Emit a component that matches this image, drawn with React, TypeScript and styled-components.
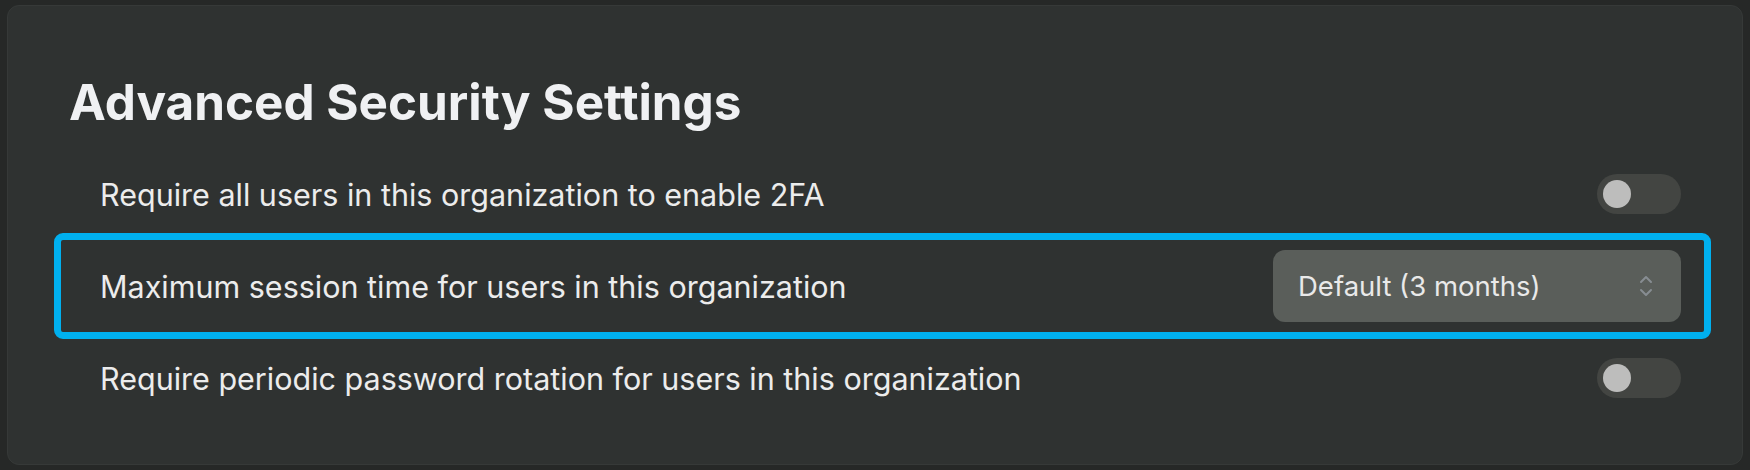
import styled, { createGlobalStyle } from 'styled-components';

const GlobalStyle = createGlobalStyle`
  html, body {
    margin: 0;
    padding: 0;
    background: #262827;
  }
  body {
    font-family: Inter, "Noto Sans", sans-serif;
    -webkit-font-smoothing: antialiased;
  }
`;

const Page = styled.div`
  width: 1750px;
  height: 470px;
  padding: 5px 7px;
  box-sizing: border-box;
`;

const Card = styled.section`
  height: 460px;
  box-sizing: border-box;
  background: #2f3231;
  border: 1px solid #363938;
  border-radius: 12px;
  padding: 66px 38px 0 53px;
`;

/* heading */
const Title = styled.h2`
  margin: 0 0 16px 8px;
  font-size: 49.4px;
  line-height: 60px;
  font-weight: 700;
  color: #f0f1f3;
`;

const List = styled.div`
  display: flex;
  flex-direction: column;
`;

const Row = styled.div<{ $highlight?: boolean }>`
  display: flex;
  align-items: center;
  justify-content: space-between;
  height: 92px;
  padding: 0 23px 0 39px;
  border-radius: 2px;
  outline: ${(p) => (p.$highlight ? '7px solid #00b0ef' : 'none')};
  outline-offset: 0;
`;

const Label = styled.span`
  font-size: 30.5px;
  color: #ececec;
`;

const Track = styled.button<{ $on?: boolean }>`
  position: relative;
  width: 84px;
  height: 40px;
  padding: 0;
  border: none;
  border-radius: 20px;
  background: ${(p) => (p.$on ? '#00b0ef' : '#434542')};
  cursor: pointer;

  &::after {
    content: '';
    position: absolute;
    top: 6px;
    left: ${(p) => (p.$on ? '50px' : '6px')};
    width: 28px;
    height: 28px;
    border-radius: 50%;
    background: #bdbdbc;
  }
`;

const Select = styled.div`
  display: flex;
  align-items: center;
  justify-content: space-between;
  width: 408px;
  height: 72px;
  box-sizing: border-box;
  padding: 0 28px 0 25px;
  border-radius: 12px;
  background: #5a5e5a;
  font-size: 27.5px;
  color: #e9e9e9;
`;

function Chevrons() {
  return (
    <svg width="14" height="22" viewBox="0 0 14 22" fill="none">
      <path d="M2 7 L7 2 L12 7" stroke="#878d92" strokeWidth="2" strokeLinecap="round" strokeLinejoin="round" />
      <path d="M2 15 L7 20 L12 15" stroke="#878d92" strokeWidth="2" strokeLinecap="round" strokeLinejoin="round" />
    </svg>
  );
}

export default function App() {
  return (
    <Page>
      <GlobalStyle />
      <Card>
        <Title>Advanced Security Settings</Title>
        <List>
          <Row>
            <Label>Require all users in this organization to enable 2FA</Label>
            <Track aria-label="Require 2FA" />
          </Row>
          <Row $highlight>
            <Label>Maximum session time for users in this organization</Label>
            <Select>
              <span>Default (3 months)</span>
              <Chevrons />
            </Select>
          </Row>
          <Row>
            <Label>Require periodic password rotation for users in this organization</Label>
            <Track aria-label="Require password rotation" />
          </Row>
        </List>
      </Card>
    </Page>
  );
}
